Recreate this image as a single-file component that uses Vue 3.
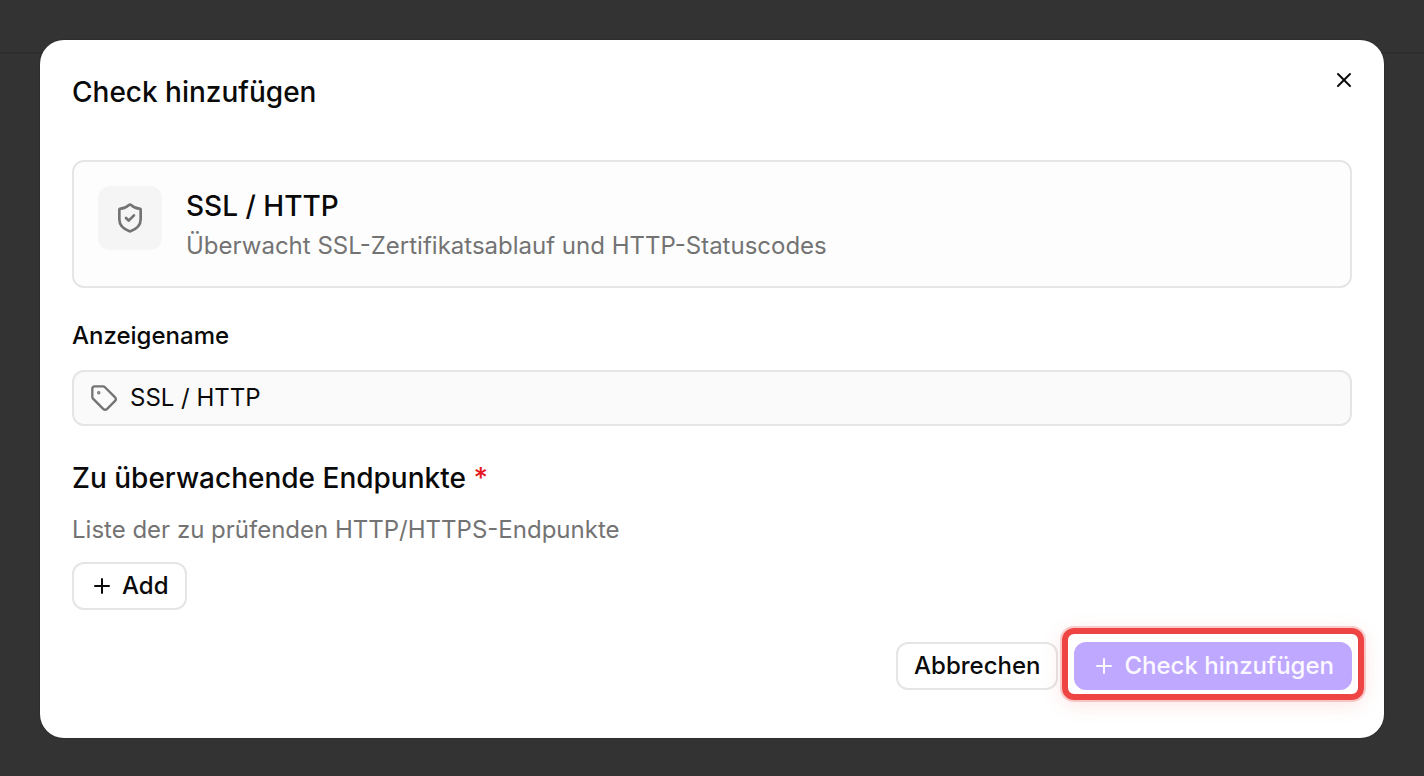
<script setup>
import { ref } from 'vue'

const displayName = ref('SSL / HTTP')
</script>

<template>
  <div class="backdrop">
    <div class="topbar"></div>
    <form class="dialog" role="dialog" aria-labelledby="dialog-title" @submit.prevent>
      <header class="dialog-header">
        <h1 id="dialog-title" class="heading">Check hinzufügen</h1>
        <button type="button" class="close" aria-label="Schließen">
          <svg class="icon-md" viewBox="0 0 24 24"><path d="M18 6 6 18" /><path d="m6 6 12 12" /></svg>
        </button>
      </header>

      <section class="card">
        <div class="card-icon">
          <svg class="icon-lg" viewBox="0 0 24 24">
            <path d="M20 13c0 5-3.5 7.5-7.66 8.95a1 1 0 0 1-.67-.01C7.5 20.5 4 18 4 13V6a1 1 0 0 1 1-1c2 0 4.500-1.200 6.240-2.720a1.170 1.170 0 0 1 1.520 0C14.510 3.810 17 5 19 5a1 1 0 0 1 1 1z" />
            <path d="m9 12 2 2 4-4" />
          </svg>
        </div>
        <div class="card-text">
          <h2 class="heading">SSL / HTTP</h2>
          <p class="muted">Überwacht SSL-Zertifikatsablauf und HTTP-Statuscodes</p>
        </div>
      </section>

      <div class="field">
        <label class="label" for="display-name">Anzeigename</label>
        <div class="input-box">
          <svg class="icon-tag" viewBox="0 0 24 24">
            <path d="M12.586 2.586A2 2 0 0 0 11.172 2H4a2 2 0 0 0-2 2v7.172a2 2 0 0 0 .586 1.414l8.704 8.704a2.426 2.426 0 0 0 3.420 0l6.580-6.580a2.426 2.426 0 0 0 0-3.420z" />
            <circle cx="7.500" cy="7.500" r=".5" fill="currentColor" />
          </svg>
          <input id="display-name" v-model="displayName" type="text" />
        </div>
      </div>

      <section class="endpoints">
        <h2 class="heading">Zu überwachende Endpunkte <span class="required">*</span></h2>
        <p class="muted">Liste der zu prüfenden HTTP/HTTPS-Endpunkte</p>
        <button type="button" class="btn with-icon">
          <svg class="icon-md" viewBox="0 0 24 24"><path d="M5 12h14" /><path d="M12 5v14" /></svg>
          Add
        </button>
      </section>

      <footer class="actions">
        <button type="button" class="btn">Abbrechen</button>
        <button type="submit" class="btn with-icon primary">
          <svg class="icon-md" viewBox="0 0 24 24"><path d="M5 12h14" /><path d="M12 5v14" /></svg>
          Check hinzufügen
        </button>
      </footer>
    </form>
  </div>
</template>

<style>
body {
  background: #333333;
}
</style>

<style scoped>
* {
  box-sizing: border-box;
}

.backdrop {
  position: relative;
  display: flex;
  align-items: center;
  min-height: 100vh;
  padding: 40px 40px 38px;
  background: #333333;
  color: #0a0a0a;
  font-family: Inter, "Liberation Sans", sans-serif;
  font-size: 24px;
  line-height: 32px;
}

.topbar {
  position: absolute;
  top: 0;
  left: 0;
  right: 0;
  height: 54px;
  border-bottom: 2px solid #2e2e2e;
}

.dialog {
  position: relative;
  flex: 1;
  min-width: 0;
  padding: 32px 32px 48px;
  border-radius: 24px;
  background: #ffffff;
  box-shadow: 0 0 0 1px rgba(0, 0, 0, 0.1);
}

h1,
h2,
p {
  margin: 0;
}

.heading {
  font-size: 28px;
  font-weight: 500;
  line-height: 40px;
}

.muted {
  color: #737373;
}

.close {
  position: absolute;
  top: 28px;
  right: 28px;
  display: flex;
  padding: 0;
  border: 0;
  background: none;
  color: inherit;
}

svg {
  flex: none;
  fill: none;
  stroke: currentColor;
  stroke-width: 2;
  stroke-linecap: round;
  stroke-linejoin: round;
}

.icon-md {
  width: 24px;
  height: 24px;
}

.icon-tag {
  width: 28px;
  height: 28px;
  color: #737373;
}

.icon-lg {
  width: 32px;
  height: 32px;
}

.card {
  display: flex;
  gap: 24px;
  margin-top: 48px;
  padding: 24px;
  border: 2px solid #e5e5e5;
  border-radius: 12px;
  background: #fdfdfd;
}

.card-icon {
  display: flex;
  align-items: center;
  justify-content: center;
  width: 64px;
  height: 64px;
  border-radius: 12px;
  background: #f5f5f5;
  color: #737373;
}

.card-text {
  display: grid;
  gap: 4px;
}

.field {
  margin-top: 32px;
}

.label {
  display: block;
  font-weight: 500;
}

.input-box {
  display: flex;
  align-items: center;
  gap: 12px;
  height: 56px;
  margin-top: 18px;
  padding: 0 16px;
  border: 2px solid #e5e5e5;
  border-radius: 12px;
  background: #fafafa;
}

.input-box input {
  flex: 1;
  min-width: 0;
  padding: 0;
  border: 0;
  outline: 0;
  background: none;
  color: inherit;
  font: inherit;
}

.endpoints {
  display: flex;
  flex-direction: column;
  align-items: flex-start;
  margin-top: 32px;
}

.endpoints .muted {
  margin: 16px 0;
}

.required {
  color: #e7181f;
}

.btn {
  display: flex;
  align-items: center;
  gap: 8px;
  height: 48px;
  padding: 0 16px;
  border: 2px solid #e5e5e5;
  border-radius: 12px;
  background: #ffffff;
  color: inherit;
  font: inherit;
  font-weight: 500;
  white-space: nowrap;
}

.actions {
  display: flex;
  justify-content: flex-end;
  gap: 16px;
  margin-top: 32px;
}

.primary {
  position: relative;
  border-color: #bfa8ff;
  background: #bfa8ff;
  color: #fbf9ff;
}

.primary::after {
  content: "";
  position: absolute;
  inset: -16px -14px -12px;
  border: 6px solid #ef4444;
  border-radius: 12px;
  box-shadow: 0 0 0 2px rgba(239, 68, 68, 0.25), 0 4px 20px rgba(239, 68, 68, 0.15);
}
</style>
